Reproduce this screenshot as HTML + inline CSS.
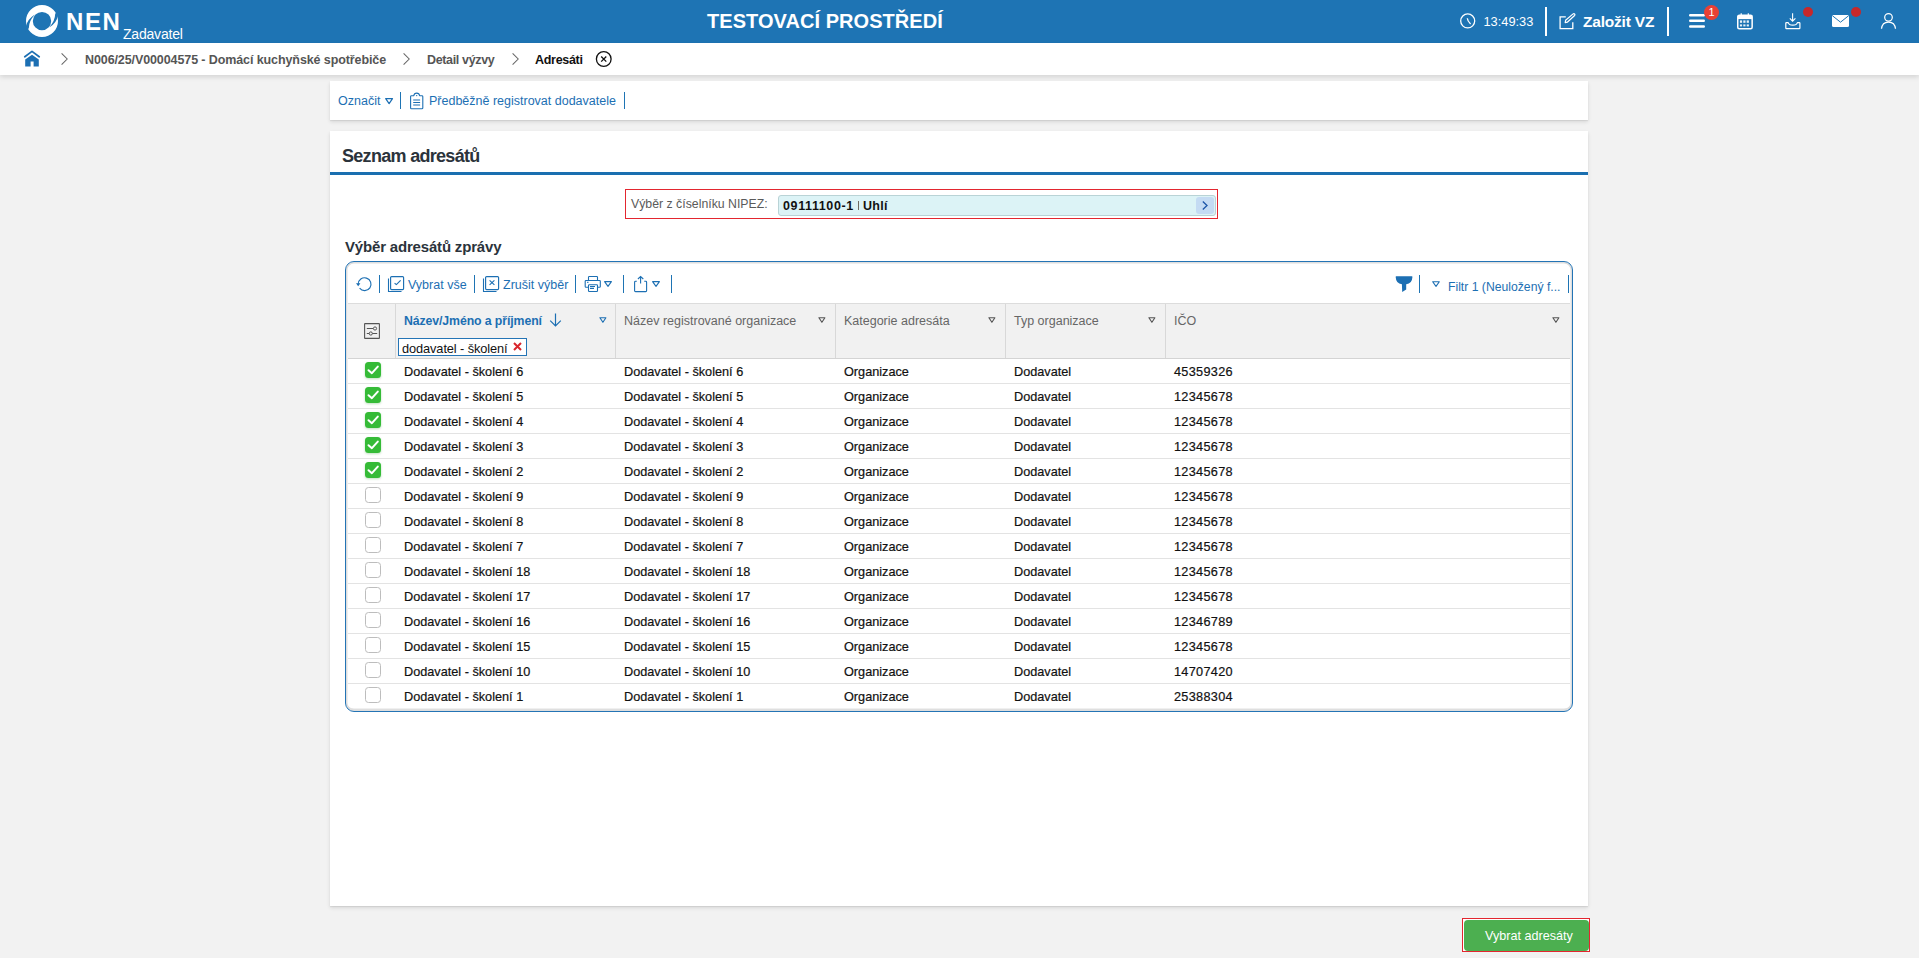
<!DOCTYPE html>
<html><head><meta charset="utf-8">
<style>
*{box-sizing:border-box}
html,body{margin:0;padding:0}
body{width:1919px;height:958px;overflow:hidden;background:#f2f2f2;font-family:"Liberation Sans",sans-serif;position:relative;color:#222}
.a{position:absolute;white-space:nowrap}
svg{position:absolute;overflow:visible}
#hdr{position:absolute;left:0;top:0;width:1919px;height:43px;background:#1e74b4}
#bc{position:absolute;left:0;top:43px;width:1919px;height:32px;background:#fff;box-shadow:0 2px 5px rgba(0,0,0,.13)}
.card{position:absolute;left:330px;width:1258px;background:#fff;box-shadow:0 2px 4px rgba(0,0,0,.11),0 1px 1px rgba(0,0,0,.06)}
.lnk{color:#1c6fb3}
.sep{position:absolute;width:1.2px!important;background:#1e74b4}
.hsep{position:absolute;width:3px;background:#fff;top:7px;height:29px}

.vs{top:304px;width:1px;height:54px;background:#d8d8d8}
.hdt{top:314px;font:12.5px 'Liberation Sans';color:#666;line-height:15px}
.ft{position:absolute;top:317px}
.cell{font:12.7px 'Liberation Sans';color:#111;line-height:15px;margin-top:1px;-webkit-text-stroke:0.2px #111}
.cb{position:absolute;left:365px;filter:drop-shadow(0 1.5px 1.2px rgba(40,150,40,.3))}
.ucb{left:365px;width:16px;height:16px;border:1px solid #bdbdbd;border-radius:3.5px;background:#fff}
.rl{left:348px;width:1222px;height:1px;background:#e3e3e3}
</style></head><body>

<div id="hdr">
  <svg style="left:26px;top:4.8px" width="32" height="32" viewBox="0 0 32 32">
    <path fill="#fff" fill-rule="evenodd" d="M16,0A16,16 0 1,1 16,32A16,16 0 1,1 16,0ZM16,6.9A9.2,9.2 0 1,0 16,25.3A9.2,9.2 0 1,0 16,6.9Z"/>
    <path fill="#1e74b4" d="M0.1,21.1Q1.3,14.4 8.5,9.7L8.6,10.1Q2.95,15.75 2.8,23.2L-1,27L-1,21Z"/>
    <path fill="#1e74b4" d="M31.9,10.9Q30.7,17.6 23.5,22.3L23.4,21.9Q29.05,16.25 29.2,8.8L33,5L33,11Z"/>
  </svg>
  <div class="a" style="left:66px;top:8px;font:bold 24px 'Liberation Sans';letter-spacing:1.6px;color:#fff;line-height:28px">NEN</div>
  <div class="a" style="left:123px;top:26px;font:14px 'Liberation Sans';color:#fff;line-height:17px;letter-spacing:-0.2px">Zadavatel</div>
  <div class="a" style="left:707px;top:9px;font:bold 20px 'Liberation Sans';color:#fff;line-height:24px;letter-spacing:0.05px">TESTOVACÍ PROSTŘEDÍ</div>

  <!-- clock -->
  <svg style="left:1459.5px;top:13px" width="16" height="16" viewBox="0 0 16 16">
    <circle cx="7.7" cy="7.9" r="7" fill="none" stroke="#fff" stroke-width="1.3"/>
    <path d="M7.3,5.2Q7.6,8.3 10.6,10.9" fill="none" stroke="#fff" stroke-width="1.3"/>
  </svg>
  <div class="a" style="left:1483.5px;top:14.5px;font:12.8px 'Liberation Sans';color:#fff;line-height:14px">13:49:33</div>
  <div class="hsep" style="left:1545px;width:2px"></div>
  <!-- edit -->
  <svg style="left:1559px;top:13px" width="17" height="17" viewBox="0 0 17 17">
    <path d="M6.8,3.9H1.1V15.6H13.8V9.2" fill="none" stroke="#fff" stroke-width="1.3"/>
    <path d="M6.2,9.7L6.6,7.3L14.1,0.9Q14.9,0.3 15.6,1Q16.3,1.8 15.6,2.5L8.3,9.2Z" fill="none" stroke="#fff" stroke-width="1.2" stroke-linejoin="round"/>
  </svg>
  <div class="a" style="left:1583px;top:13px;font:bold 15.5px 'Liberation Sans';color:#fff;line-height:18px;letter-spacing:-0.2px">Založit VZ</div>
  <div class="hsep" style="left:1667px;width:2px"></div>
  <!-- hamburger -->
  <svg style="left:1689px;top:14px" width="17" height="14" viewBox="0 0 17 14">
    <rect x="0" y="0" width="16" height="2.5" rx="1.2" fill="#fff"/>
    <rect x="0" y="5.5" width="16" height="2.5" rx="1.2" fill="#fff"/>
    <rect x="0" y="11.2" width="16" height="2.5" rx="1.2" fill="#fff"/>
  </svg>
  <div class="a" style="left:1704px;top:5px;width:15px;height:15px;border-radius:50%;background:#e84035;color:#fff;font:11px 'Liberation Sans';line-height:15px;text-align:center">1</div>
  <!-- calendar -->
  <svg style="left:1737px;top:13px" width="16" height="17" viewBox="0 0 16 17">
    <rect x="0.75" y="2.3" width="14.4" height="13.4" rx="1.5" fill="none" stroke="#fff" stroke-width="1.5"/>
    <rect x="0.75" y="2.3" width="14.4" height="3.8" fill="#fff"/>
    <path d="M4.2,0.2V3.6M11.3,0.2V3.6" stroke="#fff" stroke-width="1.2"/>
    <g fill="#fff" opacity="0.9"><rect x="2.9" y="7.4" width="2.2" height="2.4"/><rect x="6.3" y="7.4" width="2.2" height="2.4"/><rect x="9.7" y="7.4" width="2.2" height="2.4"/>
    <rect x="2.9" y="11.4" width="2.2" height="2"/><rect x="6.3" y="11.4" width="2.2" height="2"/><rect x="9.7" y="11.4" width="2.2" height="2"/></g>
  </svg>
  <!-- download -->
  <svg style="left:1785px;top:13px" width="16" height="17" viewBox="0 0 16 17">
    <path d="M7.6,0.2V8.4M4.8,5.3L7.6,8.2L10.4,5.3" fill="none" stroke="#fff" stroke-width="1.1"/>
    <path d="M3.2,9.6H1.5Q0.8,9.6 0.8,10.3V15Q0.8,15.7 1.5,15.7H14.2Q14.9,15.7 14.9,15V10.3Q14.9,9.6 14.2,9.6H12.4Q11.6,12.2 7.8,12.2Q4,12.2 3.2,9.6Z" fill="none" stroke="#fff" stroke-width="1.2" stroke-linejoin="round"/>
  </svg>
  <div class="a" style="left:1803px;top:7px;width:10px;height:10px;border-radius:50%;background:#c7282b"></div>
  <!-- mail -->
  <svg style="left:1832px;top:15.2px" width="17" height="12" viewBox="0 0 17 12">
    <rect x="0" y="0" width="17" height="12" rx="1.5" fill="#fff"/>
    <path d="M0.5,0.8L8.5,7.2L16.5,0.8" fill="none" stroke="#1e74b4" stroke-width="1"/>
  </svg>
  <div class="a" style="left:1851px;top:7px;width:10px;height:10px;border-radius:50%;background:#c7282b"></div>
  <!-- user -->
  <svg style="left:1881px;top:13px" width="16" height="17" viewBox="0 0 16 17">
    <circle cx="7.5" cy="4.3" r="3.8" fill="none" stroke="#fff" stroke-width="1.25"/>
    <path d="M0.5,15.8C0.9,11.5 3.8,9 7.5,9C11.2,9 14.1,11.5 14.5,15.8" fill="none" stroke="#fff" stroke-width="1.25"/>
  </svg>
</div>

<div id="bc">
  <svg style="left:24px;top:6.8px" width="16" height="17" viewBox="0 0 16 17">
    <path d="M0.8,6.7L8,1.4L15.2,6.7" fill="none" stroke="#1c6fb3" stroke-width="1.8" stroke-linecap="round" stroke-linejoin="round"/>
    <path d="M1.2,9.6L8,4.7L14.8,9.6V16.4H9.6V11.6H6.6V16.4H1.2Z" fill="#1c6fb3"/>
  </svg>
  <svg style="left:61px;top:10px" width="8" height="12" viewBox="0 0 8 12"><path d="M0.6,0.3L6.2,6L0.6,11.7" fill="none" stroke="#666" stroke-width="1.05"/></svg>
  <div class="a" style="left:85px;top:10px;font:bold 12.5px 'Liberation Sans';color:#555;line-height:15px;letter-spacing:-0.1px">N006/25/V00004575 - Domácí kuchyňské spotřebiče</div>
  <svg style="left:403px;top:10px" width="8" height="12" viewBox="0 0 8 12"><path d="M0.6,0.3L6.2,6L0.6,11.7" fill="none" stroke="#666" stroke-width="1.05"/></svg>
  <div class="a" style="left:427px;top:10px;font:bold 12.5px 'Liberation Sans';color:#555;line-height:15px;letter-spacing:-0.35px">Detail výzvy</div>
  <svg style="left:512px;top:10px" width="8" height="12" viewBox="0 0 8 12"><path d="M0.6,0.3L6.2,6L0.6,11.7" fill="none" stroke="#666" stroke-width="1.05"/></svg>
  <div class="a" style="left:535px;top:10px;font:bold 12.5px 'Liberation Sans';color:#111;line-height:15px;letter-spacing:-0.3px">Adresáti</div>
  <svg style="left:596px;top:9px" width="16" height="15" viewBox="0 0 16 15">
    <circle cx="7.75" cy="7" r="7.35" fill="none" stroke="#111" stroke-width="1.3"/>
    <path d="M5.2,4.5L10.3,9.6M10.3,4.5L5.2,9.6" stroke="#111" stroke-width="1.3"/>
  </svg>
</div>

<!-- toolbar card -->
<div class="card" style="top:81px;height:39px">
  <div class="a lnk" style="left:8px;top:13px;font:12.5px 'Liberation Sans';line-height:15px">Označit</div>
  <svg style="left:55px;top:17px" width="9" height="7" viewBox="0 0 9 7"><path d="M0.7,0.6H7.5L4.1,5.6Z" fill="none" stroke="#1c6fb3" stroke-width="1.2" stroke-linejoin="round"/></svg>
  <div class="sep" style="left:70px;top:11px;height:17px"></div>
  <svg style="left:80px;top:11px" width="14" height="18" viewBox="0 0 14 18">
    <path d="M3.8,3.7H1.5Q0.6,3.7 0.6,4.6V16Q0.6,16.8 1.5,16.8H11.9Q12.8,16.8 12.8,16V4.6Q12.8,3.7 11.9,3.7H9.6Q9.2,1.1 6.7,1.1Q4.2,1.1 3.8,3.7Z" fill="none" stroke="#1c6fb3" stroke-width="1.1" stroke-linejoin="round"/>
    <circle cx="6.7" cy="3.6" r="0.7" fill="#1c6fb3"/>
    <path d="M3.2,8H10.1M3.2,10.4H10.1M3.2,13H10.1" stroke="#1c6fb3" stroke-width="1.05"/>
  </svg>
  <div class="a lnk" style="left:99px;top:13px;font:12.5px 'Liberation Sans';line-height:15px">Předběžně registrovat dodavatele</div>
  <div class="sep" style="left:294px;top:11px;height:17px"></div>
</div>

<!-- main card -->
<div class="card" style="top:131px;height:775px">
  <div class="a" style="left:12px;top:15px;font:bold 18px 'Liberation Sans';color:#2b333b;line-height:20px;letter-spacing:-0.7px">Seznam adresátů</div>
  <div class="a" style="left:0;top:41px;width:1258px;height:3px;background:#1a6fb0"></div>
</div>
<!-- NIPEZ -->
<div class="a" style="left:625px;top:189px;width:593px;height:30px;border:1.5px solid #e3262f"></div>
<div class="a" style="left:631px;top:197px;font:12.3px 'Liberation Sans';color:#5a5a5a;line-height:14px">Výběr z číselníku NIPEZ:</div>
<div class="a" style="left:778px;top:195px;width:438px;height:21px;background:#dcf3f6;border:1px solid #b9d3d6;border-radius:3px"></div>
<div class="a" style="left:783px;top:198.5px;font:bold 12.5px 'Liberation Sans';color:#111;line-height:15px;letter-spacing:0.62px">09111100-1</div>
<div class="a" style="left:857.5px;top:200.5px;width:1.5px;height:9.5px;background:#6e6a60"></div>
<div class="a" style="left:863px;top:198.5px;font:bold 12.5px 'Liberation Sans';color:#111;line-height:15px;letter-spacing:0.3px">Uhlí</div>
<div class="a" style="left:1196px;top:197px;width:18px;height:17px;background:#c4dbf3;border-radius:3px"></div>
<svg style="left:1202px;top:201px" width="6" height="9" viewBox="0 0 6 9"><path d="M0.8,0.6L5,4.5L0.8,8.4" fill="none" stroke="#1c55a8" stroke-width="1.3"/></svg>

<div class="a" style="left:345px;top:237.5px;font:bold 15px 'Liberation Sans';color:#2b333b;line-height:17px;letter-spacing:-0.18px">Výběr adresátů zprávy</div>

<!-- panel -->
<div class="a" style="left:345px;top:261px;width:1228px;height:451px;border:1.5px solid #2474b5;border-radius:9px;box-shadow:inset 0 0 0 1.5px #dedede,inset 0 -2.5px 0 #e1e1e1;background:#fff"></div>

<!-- panel toolbar -->
<svg style="left:356px;top:276.5px" width="17" height="15" viewBox="0 0 17 15">
  <path d="M2.2,7.2A6.4,6.4 0 1,1 3.6,11.2" fill="none" stroke="#1c6fb3" stroke-width="1.15"/>
  <path d="M0,6.2H4.4L2.2,9.2Z" fill="#1c6fb3"/>
</svg>
<div class="sep" style="left:379px;top:275px;height:18px;width:1.5px"></div>
<svg style="left:388px;top:276px" width="17" height="17" viewBox="0 0 17 17">
  <path d="M0.5,2.5V15.5H13.5" fill="none" stroke="#1c6fb3" stroke-width="1.1"/>
  <rect x="2.6" y="0.6" width="13" height="13" rx="1" fill="none" stroke="#1c6fb3" stroke-width="1.15"/>
  <path d="M6.6,7.3L8.4,8.6L12.6,4.4" fill="none" stroke="#1c6fb3" stroke-width="1.15"/>
</svg>
<div class="a lnk" style="left:408px;top:278px;font:12.5px 'Liberation Sans';line-height:15px">Vybrat vše</div>
<div class="sep" style="left:474px;top:275px;height:18px;width:1.5px"></div>
<svg style="left:483px;top:276px" width="17" height="17" viewBox="0 0 17 17">
  <path d="M0.5,2.5V15.5H13.5" fill="none" stroke="#1c6fb3" stroke-width="1.1"/>
  <rect x="2.6" y="0.6" width="13" height="13" rx="1" fill="none" stroke="#1c6fb3" stroke-width="1.15"/>
  <path d="M6.6,4.4L11.4,8.8M11.4,4.4L6.6,8.8" fill="none" stroke="#1c6fb3" stroke-width="1.15"/>
</svg>
<div class="a lnk" style="left:503px;top:278px;font:12.5px 'Liberation Sans';line-height:15px">Zrušit výběr</div>
<div class="sep" style="left:575px;top:275px;height:18px;width:1.5px"></div>
<svg style="left:584px;top:276px" width="17" height="17" viewBox="0 0 17 17">
  <path d="M4.5,4.2V1.2Q4.5,0.5 5.2,0.5H12.8Q13.5,0.5 13.5,1.2V4.2" fill="none" stroke="#1c6fb3" stroke-width="1.1"/>
  <path d="M4,11.3H2Q1.2,11.3 1.2,10.5V5.3Q1.2,4.5 2,4.5H15.5Q16.3,4.5 16.3,5.3V10.5Q16.3,11.3 15.5,11.3H14" fill="none" stroke="#1c6fb3" stroke-width="1.1"/>
  <rect x="4.5" y="8.8" width="9" height="6.7" rx="0.7" fill="none" stroke="#1c6fb3" stroke-width="1.1"/>
  <path d="M6,10.5H11M6,12.4H10M3.2,6.4H4.4" stroke="#1c6fb3" stroke-width="1.1"/>
</svg>
<svg style="left:604px;top:281px" width="8" height="6" viewBox="0 0 8 6"><path d="M0.6,0.6H7.4L4,5.4Z" fill="none" stroke="#1c6fb3" stroke-width="1.1" stroke-linejoin="round"/></svg>
<div class="sep" style="left:623px;top:275px;height:18px;width:1.5px"></div>
<svg style="left:634px;top:276px" width="14" height="17" viewBox="0 0 14 17">
  <path d="M2.8,5.3H1.5Q0.6,5.3 0.6,6.2V14.8Q0.6,15.6 1.5,15.6H11.8Q12.6,15.6 12.6,14.8V6.2Q12.6,5.3 11.8,5.3H10.2" fill="none" stroke="#1c6fb3" stroke-width="1.1"/>
  <path d="M6.6,7.6V0.8M3.9,3L6.6,0.5L9.3,3" fill="none" stroke="#1c6fb3" stroke-width="1.1"/>
</svg>
<svg style="left:652px;top:281px" width="8" height="6" viewBox="0 0 8 6"><path d="M0.6,0.6H7.4L4,5.4Z" fill="none" stroke="#1c6fb3" stroke-width="1.1" stroke-linejoin="round"/></svg>
<div class="sep" style="left:671px;top:275px;height:18px;width:1.5px"></div>

<svg style="left:1395px;top:276px" width="18" height="17" viewBox="0 0 18 17">
  <path d="M1.1,0.2H17Q17.5,0.2 17.4,1.2Q17.1,7.5 11.2,8.3L11.2,13.4L7.2,15.9L6.9,8.3Q1,7.5 0.7,1.2Q0.6,0.2 1.1,0.2Z" fill="#1c6fb3"/>
</svg>
<div class="sep" style="left:1419px;top:275px;height:18px;width:1.5px"></div>
<svg style="left:1432px;top:281px" width="8" height="6" viewBox="0 0 8 6"><path d="M0.7,0.7H7.3L4,5.4Z" fill="none" stroke="#1c6fb3" stroke-width="1.1" stroke-linejoin="round"/></svg>
<div class="a lnk" style="left:1448px;top:280px;font:12.2px 'Liberation Sans';line-height:15px">Filtr 1 (Neuložený f...</div>
<div class="sep" style="left:1568px;top:275px;height:18px;width:1.5px"></div>

<!-- table header -->
<div class="a" style="left:348px;top:303px;width:1222px;height:56px;background:#f1f1f1;border-top:1px solid #dcdcdc;border-bottom:1.5px solid #d4d4d4"></div>
<div class="a vs" style="left:395px"></div>
<div class="a vs" style="left:615px"></div>
<div class="a vs" style="left:835px"></div>
<div class="a vs" style="left:1005px"></div>
<div class="a vs" style="left:1165px"></div>
<svg style="left:364px;top:323px" width="16" height="16" viewBox="0 0 16 16">
  <rect x="0.6" y="0.6" width="14.8" height="14.8" rx="0.4" fill="none" stroke="#555" stroke-width="1.1"/>
  <path d="M2.8,5.5H9.3M2.8,10.5H13.2" stroke="#555" stroke-width="1"/>
  <circle cx="11" cy="5.5" r="1.6" fill="#f1f1f1" stroke="#555" stroke-width="1"/>
  <circle cx="6.8" cy="10.5" r="1.6" fill="#f1f1f1" stroke="#555" stroke-width="1"/>
</svg>
<div class="a" style="left:404px;top:314px;font:bold 12.3px 'Liberation Sans';color:#1c6fb3;line-height:15px;letter-spacing:-0.1px">Název/Jméno a příjmení</div>
<svg style="left:549px;top:313px" width="13" height="14" viewBox="0 0 13 14"><path d="M6.5,0.5V13M1.2,7.6L6.5,13L11.8,7.6" fill="none" stroke="#1c6fb3" stroke-width="1.2"/></svg>
<div class="a hdt" style="left:624px">Název registrované organizace</div>
<div class="a hdt" style="left:844px">Kategorie adresáta</div>
<div class="a hdt" style="left:1014px">Typ organizace</div>
<div class="a hdt" style="left:1174px">IČO</div>
<svg class="ft" style="left:598.5px" width="9" height="7" viewBox="0 0 9 7"><path d="M0.9,0.7H6.9L3.9,5.3Z" fill="none" stroke="#1c6fb3" stroke-width="1.1" stroke-linejoin="round"/></svg>
<svg class="ft" style="left:818px" width="9" height="7" viewBox="0 0 9 7"><path d="M0.9,0.7H6.9L3.9,5.3Z" fill="none" stroke="#555" stroke-width="1.1" stroke-linejoin="round"/></svg>
<svg class="ft" style="left:988px" width="9" height="7" viewBox="0 0 9 7"><path d="M0.9,0.7H6.9L3.9,5.3Z" fill="none" stroke="#555" stroke-width="1.1" stroke-linejoin="round"/></svg>
<svg class="ft" style="left:1148px" width="9" height="7" viewBox="0 0 9 7"><path d="M0.9,0.7H6.9L3.9,5.3Z" fill="none" stroke="#555" stroke-width="1.1" stroke-linejoin="round"/></svg>
<svg class="ft" style="left:1552px" width="9" height="7" viewBox="0 0 9 7"><path d="M0.9,0.7H6.9L3.9,5.3Z" fill="none" stroke="#555" stroke-width="1.1" stroke-linejoin="round"/></svg>
<div class="a" style="left:398px;top:338px;width:129px;height:18px;background:#fff;border:1.5px solid #2474b5"></div>
<div class="a" style="left:402px;top:340.5px;font:12.8px 'Liberation Sans';color:#111;line-height:15px;letter-spacing:-0.1px">dodavatel - školení</div>
<svg style="left:513px;top:342px" width="9" height="9" viewBox="0 0 9 9"><path d="M1,1L8,8M8,1L1,8" stroke="#d9262c" stroke-width="2"/></svg>

<svg class="cb" style="top:362px" width="16" height="16" viewBox="0 0 16 16"><rect x="0" y="0" width="16" height="16" rx="3.5" fill="#35bb37"/><path d="M3.5,8.2L6.9,11.2L12.8,4.6" fill="none" stroke="#fff" stroke-width="2" stroke-linecap="round" stroke-linejoin="round"/></svg>
<div class="a cell" style="left:404px;top:364px">Dodavatel - školení 6</div>
<div class="a cell" style="left:624px;top:364px">Dodavatel - školení 6</div>
<div class="a cell" style="left:844px;top:364px">Organizace</div>
<div class="a cell" style="left:1014px;top:364px">Dodavatel</div>
<div class="a cell" style="left:1174px;top:364px;letter-spacing:0.3px">45359326</div>
<div class="a rl" style="top:383px"></div>
<svg class="cb" style="top:387px" width="16" height="16" viewBox="0 0 16 16"><rect x="0" y="0" width="16" height="16" rx="3.5" fill="#35bb37"/><path d="M3.5,8.2L6.9,11.2L12.8,4.6" fill="none" stroke="#fff" stroke-width="2" stroke-linecap="round" stroke-linejoin="round"/></svg>
<div class="a cell" style="left:404px;top:389px">Dodavatel - školení 5</div>
<div class="a cell" style="left:624px;top:389px">Dodavatel - školení 5</div>
<div class="a cell" style="left:844px;top:389px">Organizace</div>
<div class="a cell" style="left:1014px;top:389px">Dodavatel</div>
<div class="a cell" style="left:1174px;top:389px;letter-spacing:0.3px">12345678</div>
<div class="a rl" style="top:408px"></div>
<svg class="cb" style="top:412px" width="16" height="16" viewBox="0 0 16 16"><rect x="0" y="0" width="16" height="16" rx="3.5" fill="#35bb37"/><path d="M3.5,8.2L6.9,11.2L12.8,4.6" fill="none" stroke="#fff" stroke-width="2" stroke-linecap="round" stroke-linejoin="round"/></svg>
<div class="a cell" style="left:404px;top:414px">Dodavatel - školení 4</div>
<div class="a cell" style="left:624px;top:414px">Dodavatel - školení 4</div>
<div class="a cell" style="left:844px;top:414px">Organizace</div>
<div class="a cell" style="left:1014px;top:414px">Dodavatel</div>
<div class="a cell" style="left:1174px;top:414px;letter-spacing:0.3px">12345678</div>
<div class="a rl" style="top:433px"></div>
<svg class="cb" style="top:437px" width="16" height="16" viewBox="0 0 16 16"><rect x="0" y="0" width="16" height="16" rx="3.5" fill="#35bb37"/><path d="M3.5,8.2L6.9,11.2L12.8,4.6" fill="none" stroke="#fff" stroke-width="2" stroke-linecap="round" stroke-linejoin="round"/></svg>
<div class="a cell" style="left:404px;top:439px">Dodavatel - školení 3</div>
<div class="a cell" style="left:624px;top:439px">Dodavatel - školení 3</div>
<div class="a cell" style="left:844px;top:439px">Organizace</div>
<div class="a cell" style="left:1014px;top:439px">Dodavatel</div>
<div class="a cell" style="left:1174px;top:439px;letter-spacing:0.3px">12345678</div>
<div class="a rl" style="top:458px"></div>
<svg class="cb" style="top:462px" width="16" height="16" viewBox="0 0 16 16"><rect x="0" y="0" width="16" height="16" rx="3.5" fill="#35bb37"/><path d="M3.5,8.2L6.9,11.2L12.8,4.6" fill="none" stroke="#fff" stroke-width="2" stroke-linecap="round" stroke-linejoin="round"/></svg>
<div class="a cell" style="left:404px;top:464px">Dodavatel - školení 2</div>
<div class="a cell" style="left:624px;top:464px">Dodavatel - školení 2</div>
<div class="a cell" style="left:844px;top:464px">Organizace</div>
<div class="a cell" style="left:1014px;top:464px">Dodavatel</div>
<div class="a cell" style="left:1174px;top:464px;letter-spacing:0.3px">12345678</div>
<div class="a rl" style="top:483px"></div>
<div class="a ucb" style="top:487px"></div>
<div class="a cell" style="left:404px;top:489px">Dodavatel - školení 9</div>
<div class="a cell" style="left:624px;top:489px">Dodavatel - školení 9</div>
<div class="a cell" style="left:844px;top:489px">Organizace</div>
<div class="a cell" style="left:1014px;top:489px">Dodavatel</div>
<div class="a cell" style="left:1174px;top:489px;letter-spacing:0.3px">12345678</div>
<div class="a rl" style="top:508px"></div>
<div class="a ucb" style="top:512px"></div>
<div class="a cell" style="left:404px;top:514px">Dodavatel - školení 8</div>
<div class="a cell" style="left:624px;top:514px">Dodavatel - školení 8</div>
<div class="a cell" style="left:844px;top:514px">Organizace</div>
<div class="a cell" style="left:1014px;top:514px">Dodavatel</div>
<div class="a cell" style="left:1174px;top:514px;letter-spacing:0.3px">12345678</div>
<div class="a rl" style="top:533px"></div>
<div class="a ucb" style="top:537px"></div>
<div class="a cell" style="left:404px;top:539px">Dodavatel - školení 7</div>
<div class="a cell" style="left:624px;top:539px">Dodavatel - školení 7</div>
<div class="a cell" style="left:844px;top:539px">Organizace</div>
<div class="a cell" style="left:1014px;top:539px">Dodavatel</div>
<div class="a cell" style="left:1174px;top:539px;letter-spacing:0.3px">12345678</div>
<div class="a rl" style="top:558px"></div>
<div class="a ucb" style="top:562px"></div>
<div class="a cell" style="left:404px;top:564px">Dodavatel - školení 18</div>
<div class="a cell" style="left:624px;top:564px">Dodavatel - školení 18</div>
<div class="a cell" style="left:844px;top:564px">Organizace</div>
<div class="a cell" style="left:1014px;top:564px">Dodavatel</div>
<div class="a cell" style="left:1174px;top:564px;letter-spacing:0.3px">12345678</div>
<div class="a rl" style="top:583px"></div>
<div class="a ucb" style="top:587px"></div>
<div class="a cell" style="left:404px;top:589px">Dodavatel - školení 17</div>
<div class="a cell" style="left:624px;top:589px">Dodavatel - školení 17</div>
<div class="a cell" style="left:844px;top:589px">Organizace</div>
<div class="a cell" style="left:1014px;top:589px">Dodavatel</div>
<div class="a cell" style="left:1174px;top:589px;letter-spacing:0.3px">12345678</div>
<div class="a rl" style="top:608px"></div>
<div class="a ucb" style="top:612px"></div>
<div class="a cell" style="left:404px;top:614px">Dodavatel - školení 16</div>
<div class="a cell" style="left:624px;top:614px">Dodavatel - školení 16</div>
<div class="a cell" style="left:844px;top:614px">Organizace</div>
<div class="a cell" style="left:1014px;top:614px">Dodavatel</div>
<div class="a cell" style="left:1174px;top:614px;letter-spacing:0.3px">12346789</div>
<div class="a rl" style="top:633px"></div>
<div class="a ucb" style="top:637px"></div>
<div class="a cell" style="left:404px;top:639px">Dodavatel - školení 15</div>
<div class="a cell" style="left:624px;top:639px">Dodavatel - školení 15</div>
<div class="a cell" style="left:844px;top:639px">Organizace</div>
<div class="a cell" style="left:1014px;top:639px">Dodavatel</div>
<div class="a cell" style="left:1174px;top:639px;letter-spacing:0.3px">12345678</div>
<div class="a rl" style="top:658px"></div>
<div class="a ucb" style="top:662px"></div>
<div class="a cell" style="left:404px;top:664px">Dodavatel - školení 10</div>
<div class="a cell" style="left:624px;top:664px">Dodavatel - školení 10</div>
<div class="a cell" style="left:844px;top:664px">Organizace</div>
<div class="a cell" style="left:1014px;top:664px">Dodavatel</div>
<div class="a cell" style="left:1174px;top:664px;letter-spacing:0.3px">14707420</div>
<div class="a rl" style="top:683px"></div>
<div class="a ucb" style="top:687px"></div>
<div class="a cell" style="left:404px;top:689px">Dodavatel - školení 1</div>
<div class="a cell" style="left:624px;top:689px">Dodavatel - školení 1</div>
<div class="a cell" style="left:844px;top:689px">Organizace</div>
<div class="a cell" style="left:1014px;top:689px">Dodavatel</div>
<div class="a cell" style="left:1174px;top:689px;letter-spacing:0.3px">25388304</div>

<div class="a" style="left:1462px;top:918px;width:128px;height:34px;border:1.5px solid #e3262f;background:#fff"></div>
<div class="a" style="left:1463.5px;top:919.5px;width:125px;height:31px;background:#4caf50;border-radius:4px"></div>
<div class="a" style="left:1485px;top:929px;font:12.6px 'Liberation Sans';color:#fff;line-height:15px">Vybrat adresáty</div>
</body></html>
